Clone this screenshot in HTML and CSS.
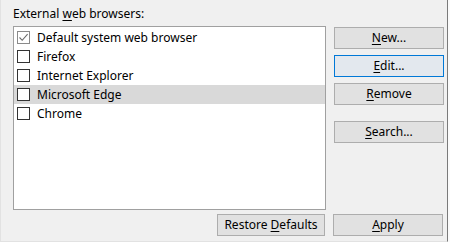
FILE: index.html
```html
<!DOCTYPE html>
<html lang="en">
<head>
    <meta charset="UTF-8">
    <title>Web Browser Preferences</title>
    <link rel="stylesheet" href="styles.css">
</head>
<body>
    <div class="window">
        <div class="group-label">External <u>w</u>eb browsers:</div>

        <div class="content">
            <div class="browser-list">
                <div class="list-row">
                    <span class="checkbox checked">
                        <svg width="11" height="11" viewBox="0 0 11 11"><path d="M1.5 5.5 L4.2 8.3 L9.6 2.2" fill="none" stroke="#6b6b6b" stroke-width="1.1"/></svg>
                    </span>
                    <span class="row-text">Default system web browser</span>
                </div>
                <div class="list-row">
                    <span class="checkbox"></span>
                    <span class="row-text">Firefox</span>
                </div>
                <div class="list-row">
                    <span class="checkbox"></span>
                    <span class="row-text">Internet Explorer</span>
                </div>
                <div class="list-row selected">
                    <span class="checkbox"></span>
                    <span class="row-text">Microsoft Edge</span>
                </div>
                <div class="list-row">
                    <span class="checkbox"></span>
                    <span class="row-text">Chrome</span>
                </div>
            </div>

            <div class="side-buttons">
                <button class="btn"><u>N</u>ew...</button>
                <button class="btn btn-default"><u>E</u>dit...</button>
                <button class="btn"><u>R</u>emove</button>
                <button class="btn btn-spaced"><u>S</u>earch...</button>
            </div>
        </div>

        <div class="footer">
            <button class="btn btn-restore">Restore <u>D</u>efaults</button>
            <button class="btn btn-apply"><u>A</u>pply</button>
        </div>
    </div>
</body>
</html>
```

FILE: styles.css
```css
* {
    margin: 0;
    padding: 0;
    box-sizing: border-box;
}

body {
    font-family: 'Noto Sans', 'Open Sans', sans-serif;
    font-size: 12px;
    color: #000;
    background: #fbfbfb;
    width: 450px;
    height: 242px;
    overflow: hidden;
}

.window {
    width: 448px;
    height: 242px;
    background: #f0f0f0;
    border-left: 1px solid #e2e2e2;
    border-right: 1px solid #7a7a7a;
    border-bottom: 1px solid #e2e2e2;
    padding: 6px 0 0 12px;
}

.group-label {
    line-height: 15px;
    height: 20px;
}

u {
    text-decoration: underline;
    text-underline-offset: 2px;
}

.content {
    display: grid;
    grid-template-columns: 313px 110px;
    column-gap: 8px;
}

.browser-list {
    height: 184px;
    background: #fff;
    border: 1px solid #a0a0a0;
    padding-top: 1px;
}

.list-row {
    display: flex;
    align-items: center;
    height: 19px;
    padding-left: 3px;
}

.list-row.selected {
    background: #d9d9d9;
}

.checkbox {
    width: 13px;
    height: 13px;
    border: 1px solid #333;
    background: #fff;
    margin-right: 7px;
    display: flex;
    align-items: center;
    justify-content: center;
}

.checkbox.checked {
    border-color: #8a8a8a;
}

.row-text {
    line-height: 15px;
}

.side-buttons {
    display: flex;
    flex-direction: column;
    gap: 6px;
    padding-top: 1px;
}

.btn {
    font-family: inherit;
    font-size: 12px;
    color: #000;
    height: 22px;
    background: #e1e1e1;
    border: 1px solid #adadad;
    line-height: 18px;
    text-align: center;
}

.btn-default {
    border-color: #0078d7;
    background: #e3e8ee;
}

.btn-spaced {
    margin-top: 10px;
}

.footer {
    display: flex;
    justify-content: flex-end;
    gap: 8px;
    padding: 4px 4px 0 0;
}

.btn-restore {
    width: 108px;
}

.btn-apply {
    width: 110px;
}
```
